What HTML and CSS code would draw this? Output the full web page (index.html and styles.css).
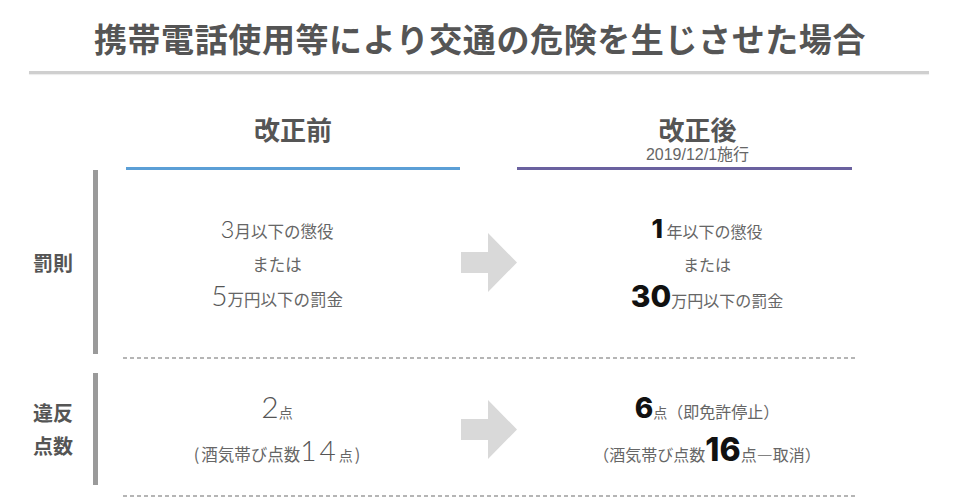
FILE: index.html
```html
<!DOCTYPE html>
<html lang="ja">
<head>
<meta charset="utf-8">
<title>携帯電話使用等により交通の危険を生じさせた場合</title>
<link rel="stylesheet" href="styles.css">
</head>
<body>
<div class="page">
  <h1 class="title">携帯電話使用等により交通の危険を生じさせた場合</h1>
  <div class="rule"></div>

  <div class="heads">
    <div class="head head-before">
      <div class="head-name">改正前</div>
    </div>
    <div class="head head-after">
      <div class="head-name">改正後</div>
      <div class="head-date">2019/12/1施行</div>
    </div>
  </div>

  <div class="section sec-penalty">
    <div class="label">罰則</div>
    <div class="bar"></div>
    <div class="cell before">
      <div class="line"><span class="num-l n24">3</span>月以下の懲役</div>
      <div class="line">または</div>
      <div class="line"><span class="num-l n28">5</span>万円以下の罰金</div>
    </div>
    <div class="arrow">
      <svg width="56" height="59" viewBox="0 0 56 59"><polygon points="0,19 27,19 27,0 56,29.5 27,59 27,40 0,40" fill="#d9d9d9"/></svg>
    </div>
    <div class="cell after">
      <div class="line"><span class="num-b n26">1</span> 年以下の懲役</div>
      <div class="line">または</div>
      <div class="line"><span class="num-b n30">30</span>万円以下の罰金</div>
    </div>
  </div>
  <div class="dash dash-1"></div>

  <div class="section sec-points">
    <div class="label">違反<br>点数</div>
    <div class="bar"></div>
    <div class="cell before">
      <div class="line2"><span class="num-l n30">2</span><span class="small">点</span></div>
      <div class="line2"><span class="paren">(</span>酒気帯び点数<span class="num-l n28 wide">14</span><span class="small">点</span><span class="paren">)</span></div>
    </div>
    <div class="arrow">
      <svg width="56" height="59" viewBox="0 0 56 59"><polygon points="0,19 27,19 27,0 56,29.5 27,59 27,40 0,40" fill="#d9d9d9"/></svg>
    </div>
    <div class="cell after">
      <div class="line2"><span class="num-b n28">6</span><span class="small">点</span>（即免許停止）</div>
      <div class="line2">（酒気帯び点数<span class="num-b n32">16</span>点—取消）</div>
    </div>
  </div>
  <div class="dash dash-2"></div>
</div>
</body>
</html>
```

FILE: styles.css
```css
html, body {
  margin: 0;
  padding: 0;
  background: #ffffff;
}

body {
  font-family: "Noto Sans CJK JP", "Noto Sans", sans-serif;
  color: #666666;
}

.page {
  width: 960px;
  height: 503px;
  overflow: hidden;
}

.title {
  margin: 0;
  padding-top: 18px;
  font-size: 33px;
  line-height: 40px;
  font-weight: 700;
  color: #555555;
  text-align: center;
  letter-spacing: 0.6px;
}

.rule {
  margin: 13px 0 0 29px;
  width: 900px;
  height: 3px;
  background: #cfcfcf;
  box-shadow: 0 1px 1px rgba(0, 0, 0, 0.08);
}

.heads {
  display: flex;
  align-items: flex-end;
  margin: 40px 0 0 126px;
  gap: 57px;
}

.head {
  display: flex;
  flex-direction: column;
  align-items: center;
}

.head-before {
  width: 334px;
  padding-bottom: 23px;
  border-bottom: 3px solid #5b9fd6;
}

.head-after {
  width: 309px;
  padding-left: 26px;
  padding-bottom: 3px;
  border-bottom: 3px solid #6a619f;
}

.head-name {
  font-size: 26px;
  line-height: 30px;
  font-weight: 700;
  color: #555555;
}

.head-date {
  margin-top: 2px;
  font-family: "Liberation Sans", "Noto Sans CJK JP", sans-serif;
  font-size: 16px;
  line-height: 18px;
  color: #666666;
}

.section {
  display: flex;
  align-items: center;
}

.label {
  width: 60px;
  padding-left: 33px;
  font-size: 20px;
  line-height: 33px;
  font-weight: 700;
  color: #555555;
}

.bar {
  width: 5px;
  background: #9a9a9a;
  align-self: stretch;
}

.sec-penalty {
  height: 184px;
}

.sec-points {
  margin-top: 14px;
  height: 112px;
}

.cell {
  text-align: center;
  font-size: 16px;
  color: #666666;
}

.cell.before {
  width: 358px;
  font-size: 16.5px;
}

.cell.after {
  width: 380px;
}

.sec-penalty .cell {
  padding-top: 4px;
}

.sec-points .cell {
  padding-top: 8px;
}

.line {
  height: 33px;
  line-height: 33px;
  white-space: nowrap;
}

.line2 {
  height: 43px;
  line-height: 43px;
  white-space: nowrap;
}

.arrow {
  margin-left: 5px;
  width: 56px;
  height: 59px;
  display: flex;
}

.num-l {
  font-family: "Lato", "Liberation Sans", sans-serif;
  font-weight: 300;
  color: #555555;
  line-height: 1;
}

.num-b {
  font-family: "Inter", "Liberation Sans", sans-serif;
  font-weight: 800;
  color: #111111;
  line-height: 1;
}

.n24 { font-size: 24px; }
.n26 { font-size: 26px; }
.n28 { font-size: 28px; }
.n30 { font-size: 30px; }
.n32 { font-size: 32px; }

.wide {
  letter-spacing: 3px;
}

.small {
  font-size: 14px;
}

.paren {
  margin: 0 2px;
}

.dash {
  margin-left: 123px;
  width: 732px;
  height: 2px;
  background: repeating-linear-gradient(90deg, #b5b5b5 0 4px, transparent 4px 7px);
}

.dash-1 {
  margin-top: 3px;
}

.dash-2 {
  margin-top: 10px;
}
```
